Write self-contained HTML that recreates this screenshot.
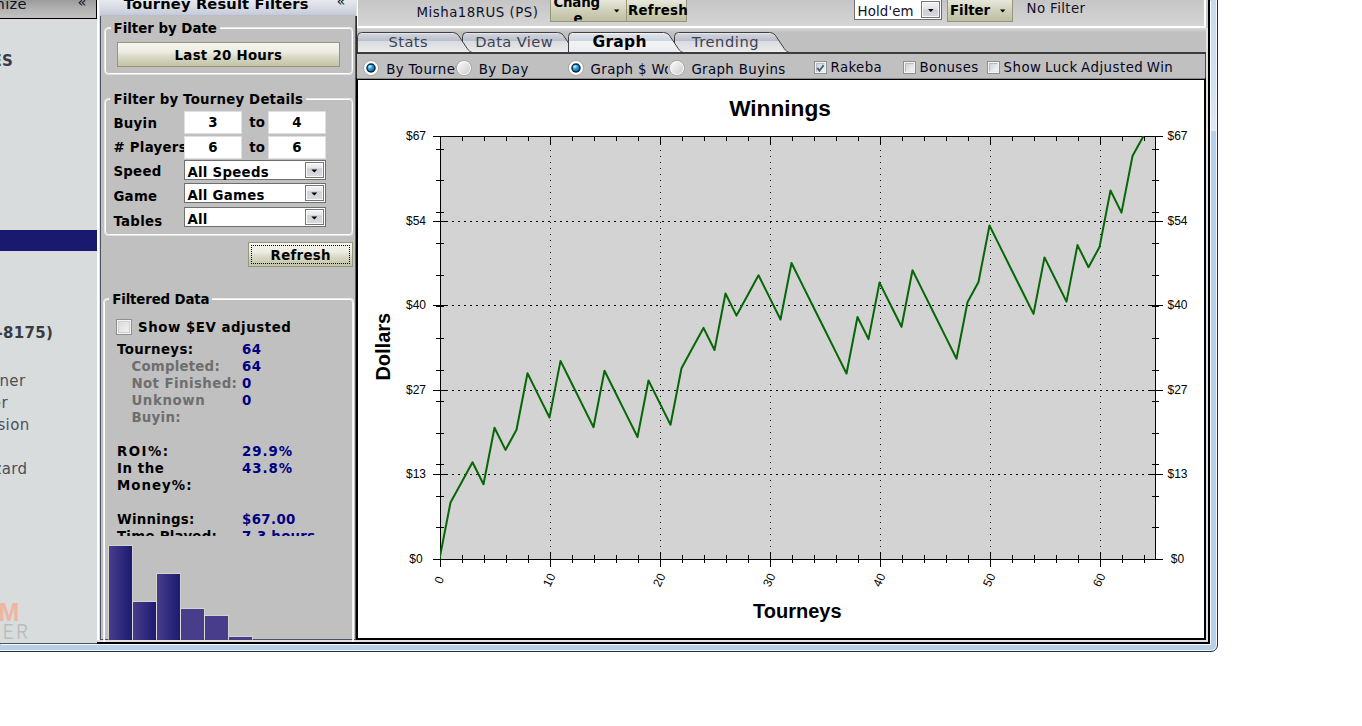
<!DOCTYPE html>
<html lang="en"><head><meta charset="utf-8"><title>Tourney Results - Graph</title>
<style>
html,body{margin:0;padding:0;background:#fff;}
body{width:1362px;height:726px;position:relative;overflow:hidden;font-family:'DejaVu Sans','Liberation Sans',sans-serif;}
.t{position:absolute;white-space:nowrap;display:block;height:20px;line-height:20px;}
div{box-sizing:border-box;}
svg{position:absolute;left:0;top:0;overflow:visible}
svg text{white-space:pre}
</style></head><body>
<div class="window-frame" style="position:absolute;left:-10px;top:-10px;width:1228px;height:662px;background:#b6d0ea;border:1px solid #2b3038;border-radius:0 0 7px 0;box-shadow:inset 0 0 0 1px rgba(255,255,255,.85);">
</div>
<div style="position:absolute;left:1211px;top:0px;width:5px;height:131px;background:linear-gradient(#c6daee,#cfe0f1 60%,#dde9f5);"></div>
<div class="client" style="position:absolute;left:0px;top:0px;width:1210px;height:644px;background:#e1e1e1;border-right:2px solid #000;border-bottom:2px solid #000;box-shadow:1px 1px 0 rgba(255,255,255,.9);overflow:hidden;">
<div class="nav" style="position:absolute;left:0px;top:0px;width:97px;height:643px;background:#d9dcdc;overflow:hidden;">
<div style="position:absolute;left:0px;top:0px;width:97px;height:19px;background:linear-gradient(#9c9c9c,#b4b4b4 55%,#c2c2c2);border-right:1px solid #000;border-bottom:1px solid #000;"></div>
<span class="t" style="left:-4.4px;top:-6px;font:400 14.67px/20px 'DejaVu Sans','Liberation Sans',sans-serif;color:#0c1424;letter-spacing:0.28px;">nize</span>
<span class="t" style="left:77.5px;top:-8.5px;font:400 14.67px/20px 'DejaVu Sans','Liberation Sans',sans-serif;color:#0c1424;letter-spacing:0.38px;">«</span>
<span class="t" style="left:-8.6px;top:51px;font:700 15px/20px 'DejaVu Sans','Liberation Sans',sans-serif;color:#383c46;letter-spacing:0.28px;">ES</span>
<div style="position:absolute;left:0px;top:230px;width:97px;height:21px;background:#191970;"></div>
<span class="t" style="left:-3.4px;top:323px;font:700 15px/20px 'DejaVu Sans','Liberation Sans',sans-serif;color:#383c46;letter-spacing:0.28px;">-8175)</span>
<span class="t" style="left:-0.6px;top:371px;font:400 15px/20px 'DejaVu Sans','Liberation Sans',sans-serif;color:#4c5058;letter-spacing:0.38px;">ner</span>
<span class="t" style="left:-8.2px;top:393px;font:400 15px/20px 'DejaVu Sans','Liberation Sans',sans-serif;color:#4c5058;letter-spacing:0.38px;">er</span>
<span class="t" style="left:-2.6px;top:415px;font:400 15px/20px 'DejaVu Sans','Liberation Sans',sans-serif;color:#4c5058;letter-spacing:0.38px;">sion</span>
<span class="t" style="left:-6.6px;top:459px;font:400 15px/20px 'DejaVu Sans','Liberation Sans',sans-serif;color:#4c5058;letter-spacing:0.38px;">zard</span>
<span class="t" style="left:-1.6px;top:602px;font:700 25px/20px 'Liberation Sans',sans-serif;color:#f0b5a2;">M</span>
<span class="t" style="left:3.2px;top:622px;font:400 22px/20px 'Liberation Sans',sans-serif;color:#b0b0b0;letter-spacing:4.00px;-webkit-text-stroke:0.55px #d9dcdc;transform:scaleX(.72);transform-origin:0 0;">ER</span>
</div>
<div style="position:absolute;left:97px;top:0px;width:3px;height:642px;background:linear-gradient(to right,#fff 0,#fff 66%,#e2e2e2 67%);"></div>
<div style="position:absolute;left:100px;top:16px;width:1px;height:626px;background:#4a5262;"></div>
<div class="filters" style="position:absolute;left:101px;top:0px;width:254px;height:640px;background:#c0c0c0;overflow:hidden;">
</div>
<div class="filters-head" style="position:absolute;left:100px;top:0px;width:256px;height:16px;background:linear-gradient(#e7e9ef,#d9dce5 45%,#c8ccd8 90%,#b2b8c6);"></div>
<span class="t" style="left:123.8px;top:-6px;font:700 14.67px/20px 'DejaVu Sans','Liberation Sans',sans-serif;color:#000;letter-spacing:0.16px;">Tourney Result Filters</span>
<span class="t" style="left:336.4px;top:-9px;font:400 14.67px/20px 'DejaVu Sans','Liberation Sans',sans-serif;color:#0c1424;letter-spacing:0.38px;">«</span>
<div style="position:absolute;left:101px;top:639px;width:254px;height:1px;background:#4a5262;"></div>
<div style="position:absolute;left:97px;top:640px;width:260px;height:2px;background:#e1e1e1;"></div>
<div class="fieldset" style="position:absolute;left:105px;top:28px;width:248px;height:46px;border:1px solid #fff;border-radius:3.5px;box-shadow:-1px 0 0 rgba(255,255,255,.6),0 -1px 0 rgba(255,255,255,.65),0 1px 0 rgba(255,255,255,.5),inset -1px 0 0 rgba(255,255,255,.35);">
</div>
<div style="position:absolute;left:110.6px;top:26px;width:109px;height:5px;background:#c0c0c0;"></div>
<span class="t" style="left:113.6px;top:19px;font:700 13.33px/20px 'DejaVu Sans','Liberation Sans',sans-serif;color:#000;">Filter by Date</span>
<div class="btn" style="position:absolute;left:117px;top:42px;width:223px;height:25px;border:1px solid #96967a;background:linear-gradient(#f6f6f0,#ecece2 40%,#d9d9c6 60%,#c3c3a8);">
</div>
<span class="t" style="left:174.6px;top:46px;font:700 13.33px/20px 'DejaVu Sans','Liberation Sans',sans-serif;color:#000;letter-spacing:0.28px;">Last 20 Hours</span>
<div class="fieldset" style="position:absolute;left:105px;top:99px;width:248px;height:136px;border:1px solid #fff;border-radius:3.5px;box-shadow:-1px 0 0 rgba(255,255,255,.6),0 -1px 0 rgba(255,255,255,.65),0 1px 0 rgba(255,255,255,.5),inset -1px 0 0 rgba(255,255,255,.35);">
</div>
<div style="position:absolute;left:110.4px;top:97px;width:196px;height:5px;background:#c0c0c0;"></div>
<span class="t" style="left:113.4px;top:90px;font:700 13.33px/20px 'DejaVu Sans','Liberation Sans',sans-serif;color:#000;letter-spacing:0.20px;">Filter by Tourney Details</span>
<span class="t" style="left:113.4px;top:114px;font:700 13.33px/20px 'DejaVu Sans','Liberation Sans',sans-serif;color:#000;letter-spacing:0.28px;">Buyin</span>
<span class="t" style="left:113.4px;top:138px;font:700 13.33px/20px 'DejaVu Sans','Liberation Sans',sans-serif;color:#000;letter-spacing:0.28px;"># Players</span>
<span class="t" style="left:113.4px;top:162px;font:700 13.33px/20px 'DejaVu Sans','Liberation Sans',sans-serif;color:#000;letter-spacing:0.28px;">Speed</span>
<span class="t" style="left:113.4px;top:187px;font:700 13.33px/20px 'DejaVu Sans','Liberation Sans',sans-serif;color:#000;letter-spacing:0.28px;">Game</span>
<span class="t" style="left:113.4px;top:212px;font:700 13.33px/20px 'DejaVu Sans','Liberation Sans',sans-serif;color:#000;letter-spacing:0.28px;">Tables</span>
<div class="input" style="position:absolute;left:184px;top:111px;width:58px;height:23px;background:#fff;border:1px solid #dfdfdf;">
</div>
<div class="input" style="position:absolute;left:268px;top:111px;width:58px;height:23px;background:#fff;border:1px solid #dfdfdf;">
</div>
<div class="input" style="position:absolute;left:184px;top:136px;width:58px;height:23px;background:#fff;border:1px solid #dfdfdf;">
</div>
<div class="input" style="position:absolute;left:268px;top:136px;width:58px;height:23px;background:#fff;border:1px solid #dfdfdf;">
</div>
<span class="t" style="left:193px;width:40px;text-align:center;top:113px;font:700 13.33px/20px 'DejaVu Sans',sans-serif;letter-spacing:.28px;color:#000">3</span>
<span class="t" style="left:277px;width:40px;text-align:center;top:113px;font:700 13.33px/20px 'DejaVu Sans',sans-serif;letter-spacing:.28px;color:#000">4</span>
<span class="t" style="left:193px;width:40px;text-align:center;top:138px;font:700 13.33px/20px 'DejaVu Sans',sans-serif;letter-spacing:.28px;color:#000">6</span>
<span class="t" style="left:277px;width:40px;text-align:center;top:138px;font:700 13.33px/20px 'DejaVu Sans',sans-serif;letter-spacing:.28px;color:#000">6</span>
<span class="t" style="left:249.2px;top:113px;font:700 13.33px/20px 'DejaVu Sans','Liberation Sans',sans-serif;color:#000;letter-spacing:0.28px;">to</span>
<span class="t" style="left:249.2px;top:138px;font:700 13.33px/20px 'DejaVu Sans','Liberation Sans',sans-serif;color:#000;letter-spacing:0.28px;">to</span>
<div class="combo" style="position:absolute;left:184px;top:160px;width:142px;height:20px;background:#fff;border:1px solid #6e6e6e;">
<div style="position:absolute;right:1px;top:1px;width:19px;height:16px;border:1px solid #777;background:linear-gradient(#f4f4f5,#e6e7ea 36%,#cfd2d9 40%,#d9dbe0);box-shadow:inset 0 0 0 1px rgba(255,255,255,.8);"></div>
<svg width="142" height="20" style="left:-1px;top:-1px"><path d="M127.3,9.5 h6 l-3,3 z" fill="#000"/></svg>
</div>
<span class="t" style="left:187.4px;top:163px;font:700 13.33px/20px 'DejaVu Sans','Liberation Sans',sans-serif;color:#000;letter-spacing:0.28px;">All Speeds</span>
<div class="combo" style="position:absolute;left:184px;top:183px;width:142px;height:20px;background:#fff;border:1px solid #6e6e6e;">
<div style="position:absolute;right:1px;top:1px;width:19px;height:16px;border:1px solid #777;background:linear-gradient(#f4f4f5,#e6e7ea 36%,#cfd2d9 40%,#d9dbe0);box-shadow:inset 0 0 0 1px rgba(255,255,255,.8);"></div>
<svg width="142" height="20" style="left:-1px;top:-1px"><path d="M127.3,9.5 h6 l-3,3 z" fill="#000"/></svg>
</div>
<span class="t" style="left:187.4px;top:186px;font:700 13.33px/20px 'DejaVu Sans','Liberation Sans',sans-serif;color:#000;letter-spacing:0.28px;">All Games</span>
<div class="combo" style="position:absolute;left:184px;top:207px;width:142px;height:20px;background:#fff;border:1px solid #6e6e6e;">
<div style="position:absolute;right:1px;top:1px;width:19px;height:16px;border:1px solid #777;background:linear-gradient(#f4f4f5,#e6e7ea 36%,#cfd2d9 40%,#d9dbe0);box-shadow:inset 0 0 0 1px rgba(255,255,255,.8);"></div>
<svg width="142" height="20" style="left:-1px;top:-1px"><path d="M127.3,9.5 h6 l-3,3 z" fill="#000"/></svg>
</div>
<span class="t" style="left:187.4px;top:210px;font:700 13.33px/20px 'DejaVu Sans','Liberation Sans',sans-serif;color:#000;letter-spacing:0.28px;">All</span>
<div class="btn" style="position:absolute;left:248px;top:242px;width:105px;height:25px;border:1px solid #96967a;background:linear-gradient(#f6f6f0,#ecece2 40%,#d9d9c6 60%,#c3c3a8);">
<div style="position:absolute;left:2px;top:2px;right:2px;bottom:2px;border:1px dotted #000;"></div>
</div>
<span class="t" style="left:270.6px;top:246px;font:700 13.33px/20px 'DejaVu Sans','Liberation Sans',sans-serif;color:#000;letter-spacing:0.28px;">Refresh</span>
<div class="fieldset" style="position:absolute;left:104px;top:299px;width:250px;height:382px;border:1px solid #fff;border-radius:3.5px;box-shadow:-1px 0 0 rgba(255,255,255,.7),0 -1px 0 rgba(255,255,255,.7),inset -1px 0 0 rgba(255,255,255,.8);">
</div>
<div style="position:absolute;left:109.3px;top:297px;width:103px;height:5px;background:#c0c0c0;"></div>
<span class="t" style="left:112.3px;top:290px;font:700 13.33px/20px 'DejaVu Sans','Liberation Sans',sans-serif;color:#000;letter-spacing:-0.14px;">Filtered Data</span>
<div class="chk" style="position:absolute;left:116px;top:319px;width:16px;height:16px;border:1px solid #8f8f8f;background:linear-gradient(135deg,#d9d9d9,#f4f4f4);box-shadow:inset 0 0 0 1px #f4f4f4, inset 0 0 0 2px #cfcfcf;">
</div>
<span class="t" style="left:138px;top:318px;font:700 13.33px/20px 'DejaVu Sans','Liberation Sans',sans-serif;color:#000;letter-spacing:0.55px;">Show $EV adjusted</span>
<div class="stats" style="position:absolute;left:105px;top:340px;width:248px;height:196px;overflow:hidden;">
</div>
<span class="t" style="left:117px;top:340px;font:700 13.33px/20px 'DejaVu Sans','Liberation Sans',sans-serif;color:#000;letter-spacing:0.38px;">Tourneys:</span>
<span class="t" style="left:242px;top:340px;font:700 13.33px/20px 'DejaVu Sans','Liberation Sans',sans-serif;color:#000080;letter-spacing:0.38px;">64</span>
<span class="t" style="left:131.4px;top:357px;font:700 13.33px/20px 'DejaVu Sans','Liberation Sans',sans-serif;color:#6e6e6e;letter-spacing:0.23px;">Completed:</span>
<span class="t" style="left:242px;top:357px;font:700 13.33px/20px 'DejaVu Sans','Liberation Sans',sans-serif;color:#000080;letter-spacing:0.38px;">64</span>
<span class="t" style="left:131.4px;top:374px;font:700 13.33px/20px 'DejaVu Sans','Liberation Sans',sans-serif;color:#6e6e6e;letter-spacing:0.43px;">Not Finished:</span>
<span class="t" style="left:242px;top:374px;font:700 13.33px/20px 'DejaVu Sans','Liberation Sans',sans-serif;color:#000080;letter-spacing:0.38px;">0</span>
<span class="t" style="left:131.4px;top:391px;font:700 13.33px/20px 'DejaVu Sans','Liberation Sans',sans-serif;color:#6e6e6e;letter-spacing:0.63px;">Unknown</span>
<span class="t" style="left:242px;top:391px;font:700 13.33px/20px 'DejaVu Sans','Liberation Sans',sans-serif;color:#000080;letter-spacing:0.38px;">0</span>
<span class="t" style="left:131.4px;top:408px;font:700 13.33px/20px 'DejaVu Sans','Liberation Sans',sans-serif;color:#6e6e6e;letter-spacing:0.28px;">Buyin:</span>
<span class="t" style="left:117px;top:442px;font:700 13.33px/20px 'DejaVu Sans','Liberation Sans',sans-serif;color:#000;letter-spacing:1.48px;">ROI%:</span>
<span class="t" style="left:242px;top:442px;font:700 13.33px/20px 'DejaVu Sans','Liberation Sans',sans-serif;color:#000080;letter-spacing:0.98px;">29.9%</span>
<span class="t" style="left:117px;top:459px;font:700 13.33px/20px 'DejaVu Sans','Liberation Sans',sans-serif;color:#000;letter-spacing:0.58px;">In the</span>
<span class="t" style="left:242px;top:459px;font:700 13.33px/20px 'DejaVu Sans','Liberation Sans',sans-serif;color:#000080;letter-spacing:0.98px;">43.8%</span>
<span class="t" style="left:117px;top:476px;font:700 13.33px/20px 'DejaVu Sans','Liberation Sans',sans-serif;color:#000;letter-spacing:1.03px;">Money%:</span>
<span class="t" style="left:117px;top:510px;font:700 13.33px/20px 'DejaVu Sans','Liberation Sans',sans-serif;color:#000;letter-spacing:0.28px;">Winnings:</span>
<span class="t" style="left:242px;top:510px;font:700 13.33px/20px 'DejaVu Sans','Liberation Sans',sans-serif;color:#000080;letter-spacing:0.38px;">$67.00</span>
<div style="position:absolute;left:105px;top:525px;width:248px;height:11px;overflow:hidden;">
<span class="t" style="left:12px;top:2px;font:700 13.33px/20px 'DejaVu Sans',sans-serif;letter-spacing:.28px;color:#000">Time Played:</span>
<span class="t" style="left:137px;top:2px;font:700 13.33px/20px 'DejaVu Sans',sans-serif;letter-spacing:.28px;color:#000080">7.3 hours</span>
</div>
<div style="position:absolute;left:109px;top:546px;width:23px;height:94px;background:linear-gradient(to right,#483d8b,#1c1a72);box-shadow:0 0 0 1px rgba(226,226,218,.55);"></div>
<div style="position:absolute;left:133px;top:602px;width:23px;height:38px;background:linear-gradient(to right,#483d8b,#1c1a72);box-shadow:0 0 0 1px rgba(226,226,218,.55);"></div>
<div style="position:absolute;left:157px;top:574px;width:23px;height:66px;background:linear-gradient(to right,#483d8b,#1c1a72);box-shadow:0 0 0 1px rgba(226,226,218,.55);"></div>
<div style="position:absolute;left:181px;top:609px;width:23px;height:31px;background:#483d8b;box-shadow:0 0 0 1px rgba(226,226,218,.55);"></div>
<div style="position:absolute;left:205px;top:616px;width:23px;height:24px;background:#483d8b;box-shadow:0 0 0 1px rgba(226,226,218,.55);"></div>
<div style="position:absolute;left:229px;top:637px;width:23px;height:3px;background:#483d8b;box-shadow:0 0 0 1px rgba(226,226,218,.55);"></div>
<div style="position:absolute;left:355px;top:16px;width:1px;height:624px;background:#555a62;"></div>
<div style="position:absolute;left:356px;top:16px;width:1px;height:624px;background:#2e2e2e;"></div>
<div class="toolbar" style="position:absolute;left:357px;top:-4px;width:849px;height:32px;background:linear-gradient(#c4c4c4,#cbcbcb 40%,#d5d5d5);border:2px solid #fff;border-left-width:1.5px;overflow:hidden;">
</div>
<span class="t" style="left:416.6px;top:3px;font:400 13.33px/20px 'DejaVu Sans','Liberation Sans',sans-serif;color:#10102c;letter-spacing:0.50px;">Misha18RUS (PS)</span>
<div class="btn" style="position:absolute;left:550px;top:-8px;width:77px;height:30px;border:1px solid #96967a;background:linear-gradient(#eeeee6,#e2e2d4 35%,#d2d2bc 60%,#bebea2);overflow:hidden;">
</div>
<span class="t" style="left:553.4px;top:-7px;font:700 13.33px/20px 'DejaVu Sans','Liberation Sans',sans-serif;color:#000;letter-spacing:-0.17px;">Chang</span>
<div style="position:absolute;left:551px;top:0px;width:75px;height:21px;overflow:hidden;">
<span class="t" style="left:22.4px;top:9px;font:700 13.33px/20px 'DejaVu Sans',sans-serif;letter-spacing:.28px;color:#000">e</span>
</div>
<svg width="10" height="6" style="left:613px;top:8px"><path d="M1,1.5 h5.4 l-2.7,2.9 z" fill="#000"/></svg>
<div class="btn" style="position:absolute;left:626px;top:-8px;width:61px;height:30px;border:1px solid #96967a;background:linear-gradient(#eeeee6,#e2e2d4 35%,#d2d2bc 60%,#bebea2);">
</div>
<span class="t" style="left:628px;top:1px;font:700 13.33px/20px 'DejaVu Sans','Liberation Sans',sans-serif;color:#000;letter-spacing:0.28px;">Refresh</span>
<div class="combo" style="position:absolute;left:854px;top:-6px;width:88px;height:26px;background:#fff;border:1px solid #6e6e6e;">
<div style="position:absolute;left:66px;top:6px;width:19px;height:17px;border:1px solid #777;background:linear-gradient(#f2f2f4,#e3e4e8 45%,#cdd0d8 55%,#d6d8de);box-shadow:inset 0 0 0 1px rgba(255,255,255,.8);"></div>
</div>
<svg width="10" height="6" style="left:927px;top:8px"><path d="M1,1 h5.6 l-2.8,3 z" fill="#000"/></svg>
<span class="t" style="left:857.6px;top:2px;font:400 13.33px/20px 'DejaVu Sans','Liberation Sans',sans-serif;color:#10102c;letter-spacing:0.13px;">Hold&#x27;em</span>
<div class="btn" style="position:absolute;left:947px;top:-8px;width:66px;height:30px;border:1px solid #96967a;background:linear-gradient(#eeeee6,#e2e2d4 35%,#d2d2bc 60%,#bebea2);">
</div>
<span class="t" style="left:950.0px;top:1px;font:700 13.33px/20px 'DejaVu Sans','Liberation Sans',sans-serif;color:#000;letter-spacing:-0.02px;">Filter</span>
<svg width="10" height="6" style="left:999px;top:8px"><path d="M1,1.5 h5.4 l-2.7,2.9 z" fill="#000"/></svg>
<span class="t" style="left:1026.6px;top:-1px;font:400 13.33px/20px 'DejaVu Sans','Liberation Sans',sans-serif;color:#10102c;letter-spacing:0.38px;">No Filter</span>
<div style="position:absolute;left:357px;top:28px;width:849px;height:24px;background:linear-gradient(#dadada,#c6c6c6 3px,#c0c0c0 5px);"></div>
<div class="options" style="position:absolute;left:357px;top:52px;width:849px;height:27px;background:#c0c0c0;border-top:2px solid #3c3c3c;border-right:1px solid #4a4a4a;">
</div>
<svg width="1362" height="60" viewBox="0 0 1362 60"><defs><linearGradient id="tg" x1="0" y1="33" x2="0" y2="52" gradientUnits="userSpaceOnUse"><stop offset="0" stop-color="#f4f5f7"/><stop offset="0.06" stop-color="#cfd3dc"/><stop offset="0.40" stop-color="#b9c0cc"/><stop offset="0.42" stop-color="#d8dadf"/><stop offset="0.95" stop-color="#e9e9ea"/><stop offset="1" stop-color="#f4f4f4"/></linearGradient><linearGradient id="tgs" x1="0" y1="33" x2="0" y2="52" gradientUnits="userSpaceOnUse"><stop offset="0" stop-color="#ffffff"/><stop offset="0.06" stop-color="#dfe3ea"/><stop offset="0.40" stop-color="#ccd3de"/><stop offset="0.42" stop-color="#f3f4f6"/><stop offset="1" stop-color="#ebecef"/></linearGradient></defs><path d="M674.5,53 L674.5,36.5 Q674.5,32.5 678.5,32.5 H769.5 C773.5,32.8 775,34.5 776.5,37 L784.2,48.5 C785.7,50.7 787,51.8 789.3,52.5 V53 Z" fill="url(#tg)" stroke="#3f3f3f" stroke-width="1"/><path d="M462.5,53 L462.5,36.5 Q462.5,32.5 466.5,32.5 H557.5 C561.5,32.8 563,34.5 564.5,37 L572.2,48.5 C573.7,50.7 575,51.8 577.3,52.5 V53 Z" fill="url(#tg)" stroke="#3f3f3f" stroke-width="1"/><path d="M357.5,53 L357.5,36.5 Q357.5,32.5 361.5,32.5 H452.5 C456.5,32.8 458,34.5 459.5,37 L467.2,48.5 C468.7,50.7 470,51.8 472.3,52.5 V53 Z" fill="url(#tg)" stroke="#3f3f3f" stroke-width="1"/><path d="M568.5,53 L568.5,36.5 Q568.5,32.5 572.5,32.5 H663.5 C667.5,32.8 669,34.5 670.5,37 L678.2,48.5 C679.7,50.7 681,51.8 683.3,52.5 V53 Z" fill="url(#tgs)" stroke="#3f3f3f" stroke-width="1"/><rect x="357" y="52" width="849" height="2" fill="#3c3c3c"/></svg>
<span class="t" style="left:388.6px;top:32px;font:400 14.67px/20px 'DejaVu Sans','Liberation Sans',sans-serif;color:#3c4254;letter-spacing:0.38px;">Stats</span>
<span class="t" style="left:475.2px;top:32px;font:400 14.67px/20px 'DejaVu Sans','Liberation Sans',sans-serif;color:#3c4254;letter-spacing:0.38px;">Data View</span>
<span class="t" style="left:691.8px;top:32px;font:400 14.67px/20px 'DejaVu Sans','Liberation Sans',sans-serif;color:#3c4254;letter-spacing:0.58px;">Trending</span>
<span class="t" style="left:592.4px;top:32px;font:700 15.5px/20px 'DejaVu Sans','Liberation Sans',sans-serif;color:#000;letter-spacing:0.28px;">Graph</span>
<div style="position:absolute;left:386.2px;top:58px;width:69.6px;height:22px;overflow:hidden;">
<span class="t" style="left:0;top:2px;font:400 13.33px/20px 'DejaVu Sans',sans-serif;letter-spacing:.38px;color:#05051c">By Tourney</span>
</div>
<div style="position:absolute;left:590.6px;top:58px;width:77.6px;height:22px;overflow:hidden;">
<span class="t" style="left:0;top:2px;font:400 13.33px/20px 'DejaVu Sans',sans-serif;letter-spacing:.38px;color:#05051c">Graph $ Won</span>
</div>
<span class="t" style="left:478.8px;top:60px;font:400 13.33px/20px 'DejaVu Sans','Liberation Sans',sans-serif;color:#05051c;letter-spacing:0.38px;">By Day</span>
<span class="t" style="left:691.4px;top:60px;font:400 13.33px/20px 'DejaVu Sans','Liberation Sans',sans-serif;color:#05051c;letter-spacing:0.38px;">Graph Buyins</span>
<svg width="18" height="18" style="left:362px;top:59px" viewBox="-9 -9 18 18"><defs><radialGradient id="rb371" cx="0.32" cy="0.28" r="0.8"><stop offset="0" stop-color="#e8fbff"/><stop offset="0.22" stop-color="#7fd2f0"/><stop offset="0.5" stop-color="#2a9fd8"/><stop offset="0.85" stop-color="#1a78b4"/><stop offset="1" stop-color="#0e4a7a"/></radialGradient><linearGradient id="rf371" x1="0" y1="0" x2="1" y2="1"><stop offset="0" stop-color="#fbfbfb"/><stop offset="1" stop-color="#c9ccd1"/></linearGradient></defs><circle r="7.5" fill="#fff" stroke="#8c8c8c" stroke-opacity=".75" stroke-width="0.9"/><circle r="4.75" fill="#0a2a4c"/><circle r="3.3" fill="url(#rb371)"/></svg>
<svg width="18" height="18" style="left:455.2px;top:59px" viewBox="-9 -9 18 18"><defs><radialGradient id="rb464" cx="0.32" cy="0.28" r="0.8"><stop offset="0" stop-color="#e8fbff"/><stop offset="0.22" stop-color="#7fd2f0"/><stop offset="0.5" stop-color="#2a9fd8"/><stop offset="0.85" stop-color="#1a78b4"/><stop offset="1" stop-color="#0e4a7a"/></radialGradient><linearGradient id="rf464" x1="0" y1="0" x2="1" y2="1"><stop offset="0" stop-color="#fbfbfb"/><stop offset="1" stop-color="#c9ccd1"/></linearGradient></defs><circle r="7.5" fill="#fff" stroke="#8c8c8c" stroke-opacity=".75" stroke-width="0.9"/><circle r="6.2" fill="url(#rf464)"/></svg>
<svg width="18" height="18" style="left:567px;top:59px" viewBox="-9 -9 18 18"><defs><radialGradient id="rb576" cx="0.32" cy="0.28" r="0.8"><stop offset="0" stop-color="#e8fbff"/><stop offset="0.22" stop-color="#7fd2f0"/><stop offset="0.5" stop-color="#2a9fd8"/><stop offset="0.85" stop-color="#1a78b4"/><stop offset="1" stop-color="#0e4a7a"/></radialGradient><linearGradient id="rf576" x1="0" y1="0" x2="1" y2="1"><stop offset="0" stop-color="#fbfbfb"/><stop offset="1" stop-color="#c9ccd1"/></linearGradient></defs><circle r="7.5" fill="#fff" stroke="#8c8c8c" stroke-opacity=".75" stroke-width="0.9"/><circle r="4.75" fill="#0a2a4c"/><circle r="3.3" fill="url(#rb576)"/></svg>
<svg width="18" height="18" style="left:668.4px;top:59px" viewBox="-9 -9 18 18"><defs><radialGradient id="rb677" cx="0.32" cy="0.28" r="0.8"><stop offset="0" stop-color="#e8fbff"/><stop offset="0.22" stop-color="#7fd2f0"/><stop offset="0.5" stop-color="#2a9fd8"/><stop offset="0.85" stop-color="#1a78b4"/><stop offset="1" stop-color="#0e4a7a"/></radialGradient><linearGradient id="rf677" x1="0" y1="0" x2="1" y2="1"><stop offset="0" stop-color="#fbfbfb"/><stop offset="1" stop-color="#c9ccd1"/></linearGradient></defs><circle r="7.5" fill="#fff" stroke="#8c8c8c" stroke-opacity=".75" stroke-width="0.9"/><circle r="6.2" fill="url(#rf677)"/></svg>
<div class="chk" style="position:absolute;left:814px;top:61px;width:13px;height:13px;border:1px solid #8e8f8f;background:#f4f4f4;">
<div style="position:absolute;left:1px;top:1px;width:9px;height:9px;border:1px solid;border-color:#b8bcc2 #e6e8ea #e6e8ea #b8bcc2;background:linear-gradient(135deg,#cfd3d8,#f4f5f6);"></div>
<svg width="13" height="13" style="left:-1px;top:-1px"><path d="M3.3,6.9 L5.4,9.7 L9.7,4.1" fill="none" stroke="#46607e" stroke-width="1.8"/></svg>
</div>
<div class="chk" style="position:absolute;left:903px;top:61px;width:13px;height:13px;border:1px solid #8e8f8f;background:#f4f4f4;">
<div style="position:absolute;left:1px;top:1px;width:9px;height:9px;border:1px solid;border-color:#b8bcc2 #e6e8ea #e6e8ea #b8bcc2;background:linear-gradient(135deg,#cfd3d8,#f4f5f6);"></div>
</div>
<div class="chk" style="position:absolute;left:987px;top:61px;width:13px;height:13px;border:1px solid #8e8f8f;background:#f4f4f4;">
<div style="position:absolute;left:1px;top:1px;width:9px;height:9px;border:1px solid;border-color:#b8bcc2 #e6e8ea #e6e8ea #b8bcc2;background:linear-gradient(135deg,#cfd3d8,#f4f5f6);"></div>
</div>
<span class="t" style="left:830.6px;top:58px;font:400 13.33px/20px 'DejaVu Sans','Liberation Sans',sans-serif;color:#05051c;letter-spacing:0.38px;">Rakeba</span>
<span class="t" style="left:919.6px;top:58px;font:400 13.33px/20px 'DejaVu Sans','Liberation Sans',sans-serif;color:#05051c;letter-spacing:0.38px;">Bonuses</span>
<span class="t" style="left:1003.6px;top:58px;font:400 13.33px/20px 'DejaVu Sans','Liberation Sans',sans-serif;color:#05051c;letter-spacing:0.48px;word-spacing:-1.2px;">Show Luck Adjusted Win</span>
<div class="chart" style="position:absolute;left:356px;top:78px;width:850px;height:562px;border:2px solid #000;border-top-color:#000;background:#fff;">
</div>
<div style="position:absolute;left:357px;top:78px;width:848px;height:1px;background:#8a8a8a;"></div>
<svg width="846" height="558" viewBox="358 80 846 558" style="left:358px;top:80px" font-family="'Liberation Sans',sans-serif"><rect x="441" y="137" width="714" height="422" fill="#d3d3d3"/><g shape-rendering="crispEdges" fill="#000"><path d="M440,221.5 H1155" stroke="#000" stroke-width="1" stroke-dasharray="2 4" fill="none"/><path d="M440,305.5 H1155" stroke="#000" stroke-width="1" stroke-dasharray="2 4" fill="none"/><path d="M440,390.5 H1155" stroke="#000" stroke-width="1" stroke-dasharray="2 4" fill="none"/><path d="M440,474.5 H1155" stroke="#000" stroke-width="1" stroke-dasharray="2 4" fill="none"/><path d="M550.5,138 V559" stroke="#000" stroke-width="1" stroke-dasharray="1 5" fill="none"/><path d="M660.5,138 V559" stroke="#000" stroke-width="1" stroke-dasharray="1 5" fill="none"/><path d="M770.5,138 V559" stroke="#000" stroke-width="1" stroke-dasharray="1 5" fill="none"/><path d="M880.5,138 V559" stroke="#000" stroke-width="1" stroke-dasharray="1 5" fill="none"/><path d="M990.5,138 V559" stroke="#000" stroke-width="1" stroke-dasharray="1 5" fill="none"/><path d="M1100.5,138 V559" stroke="#000" stroke-width="1" stroke-dasharray="1 5" fill="none"/><rect x="440" y="136" width="716" height="1"/><rect x="440" y="559" width="716" height="1"/><rect x="440" y="136" width="1" height="424"/><rect x="1155" y="136" width="1" height="424"/><rect x="440" y="552" width="1" height="15"/><rect x="440" y="137" width="1" height="7"/><rect x="462" y="555" width="1" height="8"/><rect x="462" y="137" width="1" height="4"/><rect x="484" y="555" width="1" height="8"/><rect x="484" y="137" width="1" height="4"/><rect x="506" y="555" width="1" height="8"/><rect x="506" y="137" width="1" height="4"/><rect x="528" y="555" width="1" height="8"/><rect x="528" y="137" width="1" height="4"/><rect x="550" y="552" width="1" height="15"/><rect x="550" y="137" width="1" height="7"/><rect x="572" y="555" width="1" height="8"/><rect x="572" y="137" width="1" height="4"/><rect x="594" y="555" width="1" height="8"/><rect x="594" y="137" width="1" height="4"/><rect x="616" y="555" width="1" height="8"/><rect x="616" y="137" width="1" height="4"/><rect x="638" y="555" width="1" height="8"/><rect x="638" y="137" width="1" height="4"/><rect x="660" y="552" width="1" height="15"/><rect x="660" y="137" width="1" height="7"/><rect x="682" y="555" width="1" height="8"/><rect x="682" y="137" width="1" height="4"/><rect x="704" y="555" width="1" height="8"/><rect x="704" y="137" width="1" height="4"/><rect x="726" y="555" width="1" height="8"/><rect x="726" y="137" width="1" height="4"/><rect x="748" y="555" width="1" height="8"/><rect x="748" y="137" width="1" height="4"/><rect x="770" y="552" width="1" height="15"/><rect x="770" y="137" width="1" height="7"/><rect x="792" y="555" width="1" height="8"/><rect x="792" y="137" width="1" height="4"/><rect x="814" y="555" width="1" height="8"/><rect x="814" y="137" width="1" height="4"/><rect x="836" y="555" width="1" height="8"/><rect x="836" y="137" width="1" height="4"/><rect x="858" y="555" width="1" height="8"/><rect x="858" y="137" width="1" height="4"/><rect x="880" y="552" width="1" height="15"/><rect x="880" y="137" width="1" height="7"/><rect x="902" y="555" width="1" height="8"/><rect x="902" y="137" width="1" height="4"/><rect x="924" y="555" width="1" height="8"/><rect x="924" y="137" width="1" height="4"/><rect x="946" y="555" width="1" height="8"/><rect x="946" y="137" width="1" height="4"/><rect x="968" y="555" width="1" height="8"/><rect x="968" y="137" width="1" height="4"/><rect x="990" y="552" width="1" height="15"/><rect x="990" y="137" width="1" height="7"/><rect x="1012" y="555" width="1" height="8"/><rect x="1012" y="137" width="1" height="4"/><rect x="1034" y="555" width="1" height="8"/><rect x="1034" y="137" width="1" height="4"/><rect x="1056" y="555" width="1" height="8"/><rect x="1056" y="137" width="1" height="4"/><rect x="1078" y="555" width="1" height="8"/><rect x="1078" y="137" width="1" height="4"/><rect x="1100" y="552" width="1" height="15"/><rect x="1100" y="137" width="1" height="7"/><rect x="1122" y="555" width="1" height="8"/><rect x="1122" y="137" width="1" height="4"/><rect x="1144" y="555" width="1" height="8"/><rect x="1144" y="137" width="1" height="4"/><rect x="433" y="136" width="15" height="1"/><rect x="1148" y="136" width="15" height="1"/><rect x="433" y="221" width="15" height="1"/><rect x="1148" y="221" width="15" height="1"/><rect x="433" y="305" width="15" height="1"/><rect x="1148" y="305" width="15" height="1"/><rect x="433" y="390" width="15" height="1"/><rect x="1148" y="390" width="15" height="1"/><rect x="433" y="474" width="15" height="1"/><rect x="1148" y="474" width="15" height="1"/><rect x="433" y="559" width="15" height="1"/><rect x="1148" y="559" width="15" height="1"/><rect x="436" y="527" width="8" height="1"/><rect x="1152" y="527" width="7" height="1"/><rect x="436" y="496" width="8" height="1"/><rect x="1152" y="496" width="7" height="1"/><rect x="436" y="464" width="8" height="1"/><rect x="1152" y="464" width="7" height="1"/><rect x="436" y="433" width="8" height="1"/><rect x="1152" y="433" width="7" height="1"/><rect x="436" y="401" width="8" height="1"/><rect x="1152" y="401" width="7" height="1"/><rect x="436" y="370" width="8" height="1"/><rect x="1152" y="370" width="7" height="1"/><rect x="436" y="338" width="8" height="1"/><rect x="1152" y="338" width="7" height="1"/><rect x="436" y="306" width="8" height="1"/><rect x="1152" y="306" width="7" height="1"/><rect x="436" y="275" width="8" height="1"/><rect x="1152" y="275" width="7" height="1"/><rect x="436" y="243" width="8" height="1"/><rect x="1152" y="243" width="7" height="1"/><rect x="436" y="212" width="8" height="1"/><rect x="1152" y="212" width="7" height="1"/><rect x="436" y="180" width="8" height="1"/><rect x="1152" y="180" width="7" height="1"/><rect x="436" y="149" width="8" height="1"/><rect x="1152" y="149" width="7" height="1"/></g><clipPath id="pc"><rect x="440" y="136" width="716" height="424"/></clipPath><path d="M439.5,559.0 L450.5,502.5 L461.5,482.4 L472.5,462.2 L483.5,484.3 L494.5,427.8 L505.5,449.9 L516.5,429.8 L527.5,373.3 L538.5,395.4 L549.5,417.5 L560.5,360.9 L571.5,383.0 L582.5,405.1 L593.5,427.2 L604.5,370.7 L615.5,392.8 L626.5,414.9 L637.5,437.0 L648.5,380.5 L659.5,402.6 L670.5,424.7 L681.5,368.2 L692.5,348.1 L703.5,327.9 L714.5,350.0 L725.5,293.5 L736.5,315.6 L747.5,295.5 L758.5,275.3 L769.5,297.4 L780.5,319.5 L791.5,263.0 L802.5,285.1 L813.5,307.2 L824.5,329.3 L835.5,351.4 L846.5,373.5 L857.5,317.0 L868.5,339.1 L879.5,282.6 L890.5,304.7 L901.5,326.8 L912.5,270.3 L923.5,292.4 L934.5,314.5 L945.5,336.6 L956.5,358.7 L967.5,302.2 L978.5,282.0 L989.5,225.5 L1000.5,247.6 L1011.5,269.7 L1022.5,291.8 L1033.5,313.9 L1044.5,257.4 L1055.5,279.5 L1066.5,301.6 L1077.5,245.1 L1088.5,267.2 L1099.5,247.1 L1110.5,190.5 L1121.5,212.6 L1132.5,156.1 L1143.5,136.0" fill="none" stroke="#056705" stroke-width="2" stroke-linejoin="round" clip-path="url(#pc)"/><text x="416.0" y="140.3" font-size="12" text-anchor="middle" fill="#000">$67</text><text x="1177.5" y="140.3" font-size="12" text-anchor="middle" fill="#000">$67</text><text x="416.0" y="225.3" font-size="12" text-anchor="middle" fill="#000">$54</text><text x="1177.5" y="225.3" font-size="12" text-anchor="middle" fill="#000">$54</text><text x="416.0" y="309.3" font-size="12" text-anchor="middle" fill="#000">$40</text><text x="1177.5" y="309.3" font-size="12" text-anchor="middle" fill="#000">$40</text><text x="416.0" y="394.3" font-size="12" text-anchor="middle" fill="#000">$27</text><text x="1177.5" y="394.3" font-size="12" text-anchor="middle" fill="#000">$27</text><text x="416.0" y="478.3" font-size="12" text-anchor="middle" fill="#000">$13</text><text x="1177.5" y="478.3" font-size="12" text-anchor="middle" fill="#000">$13</text><text x="416.0" y="563.3" font-size="12" text-anchor="middle" fill="#000">$0</text><text x="1177.5" y="563.3" font-size="12" text-anchor="middle" fill="#000">$0</text><text transform="translate(439,580) rotate(-65)" x="0" y="4.3" font-size="12" text-anchor="middle" fill="#000">0</text><text transform="translate(549,580) rotate(-65)" x="0" y="4.3" font-size="12" text-anchor="middle" fill="#000">10</text><text transform="translate(659,580) rotate(-65)" x="0" y="4.3" font-size="12" text-anchor="middle" fill="#000">20</text><text transform="translate(769,580) rotate(-65)" x="0" y="4.3" font-size="12" text-anchor="middle" fill="#000">30</text><text transform="translate(879,580) rotate(-65)" x="0" y="4.3" font-size="12" text-anchor="middle" fill="#000">40</text><text transform="translate(989,580) rotate(-65)" x="0" y="4.3" font-size="12" text-anchor="middle" fill="#000">50</text><text transform="translate(1099,580) rotate(-65)" x="0" y="4.3" font-size="12" text-anchor="middle" fill="#000">60</text><text x="780" y="115.6" font-size="22.67" font-weight="700" text-anchor="middle">Winnings</text><text x="797.3" y="617.7" font-size="20" font-weight="700" text-anchor="middle">Tourneys</text><text transform="translate(390.3,346.7) rotate(-90)" font-size="20" font-weight="700" text-anchor="middle">Dollars</text></svg>
</div>
<div style="position:absolute;left:0px;top:642px;width:97px;height:1px;background:#d9dcdc;"></div>
<div style="position:absolute;left:0px;top:643px;width:97px;height:1px;background:#4c5462;"></div>
<div style="position:absolute;left:1206px;top:0px;width:2px;height:28px;background:#c8c8c8;"></div>
</body></html>
